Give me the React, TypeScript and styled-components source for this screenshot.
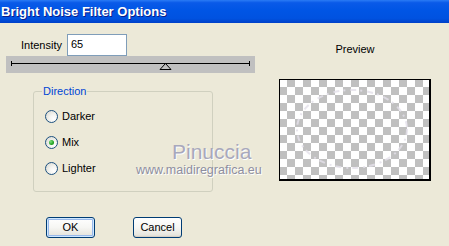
import React from 'react';
import styled, { createGlobalStyle } from 'styled-components';

const GlobalStyle = createGlobalStyle`
  html, body {
    margin: 0;
    padding: 0;
    background: #ece9d8;
  }
  body {
    font-family: "Liberation Sans", Arial, sans-serif;
    font-size: 11px;
    color: #000;
  }
`;

const Window = styled.div`
  position: relative;
  width: 449px;
  height: 246px;
  background: #ece9d8;
  display: flex;
  flex-direction: column;
  overflow: hidden;
`;

const TitleBar = styled.div`
  height: 23px;
  flex-shrink: 0;
  background: linear-gradient(
    180deg,
    #2a7bf5 0%,
    #0a5ae8 12%,
    #0055e5 45%,
    #0052e0 80%,
    #0040c8 100%
  );
  display: flex;
  align-items: center;
  padding-left: 1px;
`;

const TitleText = styled.span`
  font-family: "Liberation Sans", Arial, sans-serif;
  font-weight: bold;
  font-size: 13px;
  color: #fff;
  text-shadow: 1px 1px 0 #0a1e8a;
  line-height: 23px;
`;

const Body = styled.div`
  flex: 1;
  display: flex;
`;

const LeftColumn = styled.div`
  width: 279px;
  display: flex;
  flex-direction: column;
`;

const IntensityRow = styled.div`
  display: flex;
  align-items: center;
  gap: 5px;
  margin-top: 11px;
  padding-left: 21px;
`;

const Label = styled.span`
  font-size: 11px;
  line-height: 13px;
`;

const TextBox = styled.div`
  box-sizing: border-box;
  width: 60px;
  height: 22px;
  background: #fff;
  border: 1px solid #7f9db9;
  padding: 3px 0 0 3px;
  font-size: 11px;
  line-height: 13px;
`;

const SliderTrack = styled.div`
  position: relative;
  margin-left: 6px;
  width: 249px;
  height: 17px;
  background: #c0c0c0;
`;

const SliderLine = styled.div`
  position: absolute;
  left: 5px;
  right: 5px;
  top: 7px;
  height: 1px;
  background: #000;

  &::before,
  &::after {
    content: '';
    position: absolute;
    top: -2px;
    width: 1px;
    height: 5px;
    background: #000;
  }
  &::before { left: 0; }
  &::after { right: 0; }
`;

const Thumb = styled.svg`
  position: absolute;
  left: 153px;
  top: 7px;
`;

const GroupBox = styled.fieldset`
  box-sizing: border-box;
  margin: 12px 0 0 33px;
  width: 180px;
  height: 107px;
  padding: 0 0 0 11px;
  border: 1px solid #d0d0bf;
  border-radius: 3px;
  display: flex;
  flex-direction: column;
  gap: 13px;
`;

const Legend = styled.legend`
  padding: 0 1px;
  margin-left: -3px;
  color: #0046d5;
  font-size: 11px;
  line-height: 13px;
  margin-bottom: 12px;
`;

const RadioRow = styled.label`
  display: flex;
  align-items: center;
  gap: 4px;
  height: 13px;
  font-size: 11px;
  line-height: 13px;
`;

const RadioCircle = styled.span<{ $checked?: boolean }>`
  box-sizing: border-box;
  width: 13px;
  height: 13px;
  border-radius: 50%;
  border: 1px solid #1c5180;
  background: radial-gradient(circle at 70% 70%, #ffffff 0%, #f3f3ef 40%, #d6d5cc 100%);
  display: flex;
  align-items: center;
  justify-content: center;

  &::after {
    content: '';
    display: ${p => (p.$checked ? 'block' : 'none')};
    width: 5px;
    height: 5px;
    border-radius: 50%;
    background: radial-gradient(circle at 35% 35%, #7ee07e 0%, #21a121 60%, #1a8a1a 100%);
  }
`;

const ButtonRow = styled.div`
  display: flex;
  gap: 38px;
  margin: 25px 0 0 46px;
`;

const Button = styled.div<{ $default?: boolean }>`
  box-sizing: border-box;
  width: 49px;
  height: 21px;
  border: 1px solid #003c74;
  border-radius: 3px;
  background: linear-gradient(180deg, #ffffff 0%, #f6f6f3 50%, #e6e5de 90%, #d6d0c5 100%);
  box-shadow: ${p =>
    p.$default
      ? 'inset 0 0 0 1px #cee7ff, inset 0 0 0 2px #98b8ea'
      : 'inset 0 -1px 0 #d6d0c5'};
  display: flex;
  align-items: center;
  justify-content: center;
  font-size: 11px;
  line-height: 13px;
`;

const RightColumn = styled.div`
  width: 152px;
  display: flex;
  flex-direction: column;
  align-items: center;
`;

const PreviewLabel = styled.span`
  margin-top: 20px;
  font-size: 11px;
  line-height: 13px;
`;

const PreviewBox = styled.div`
  position: relative;
  box-sizing: border-box;
  margin-top: 23px;
  width: 152px;
  height: 102px;
  border: 1px solid #000;
  border-right-width: 2px;
  border-bottom-width: 2px;
  background: conic-gradient(#c0c0c0 25%, #fff 0 50%, #c0c0c0 0 75%, #fff 0) -1px -1px / 16px 16px;
`;

const NoiseRing = styled.svg`
  position: absolute;
  left: 14px;
  top: 7px;
`;

const Watermark = styled.div`
  position: absolute;
  left: 136px;
  top: 140px;
  display: flex;
  flex-direction: column;
  pointer-events: none;
`;

const WatermarkName = styled.span`
  margin-left: 36px;
  font-family: "Liberation Sans", Arial, sans-serif;
  font-size: 21px;
  line-height: 24px;
  color: #a8a8bc;
  text-shadow: 1px 1px 0 #ffffff;
`;

const WatermarkUrl = styled.span`
  font-family: "Liberation Sans", Arial, sans-serif;
  font-size: 12.5px;
  line-height: 12px;
  color: #8e8ea0;
  text-shadow: 1px 1px 0 #ffffff;
`;

const App: React.FC = () => {
  return (
    <>
      <GlobalStyle />
      <Window>
        <TitleBar>
          <TitleText>Bright Noise Filter Options</TitleText>
        </TitleBar>
        <Body>
          <LeftColumn>
            <IntensityRow>
              <Label>Intensity</Label>
              <TextBox>65</TextBox>
            </IntensityRow>
            <SliderTrack>
              <SliderLine />
              <Thumb width="13" height="7" viewBox="0 0 13 7">
                <path d="M6.5 0.5 L12 6.5 L1 6.5 Z" fill="none" stroke="#000" strokeWidth="1" />
              </Thumb>
            </SliderTrack>
            <GroupBox>
              <Legend>Direction</Legend>
              <RadioRow>
                <RadioCircle />
                Darker
              </RadioRow>
              <RadioRow>
                <RadioCircle $checked />
                Mix
              </RadioRow>
              <RadioRow>
                <RadioCircle />
                Lighter
              </RadioRow>
            </GroupBox>
            <ButtonRow>
              <Button $default>OK</Button>
              <Button>Cancel</Button>
            </ButtonRow>
          </LeftColumn>
          <RightColumn>
            <PreviewLabel>Preview</PreviewLabel>
            <PreviewBox>
              <NoiseRing width="116" height="84" viewBox="0 0 116 84">
                <ellipse
                  cx="58"
                  cy="42"
                  rx="55"
                  ry="39"
                  fill="none"
                  stroke="#e4e0ea"
                  strokeWidth="2"
                  strokeDasharray="6 4 2 5"
                  opacity="0.8"
                />
              </NoiseRing>
            </PreviewBox>
          </RightColumn>
        </Body>
        <Watermark>
          <WatermarkName>Pinuccia</WatermarkName>
          <WatermarkUrl>www.maidiregrafica.eu</WatermarkUrl>
        </Watermark>
      </Window>
    </>
  );
};

export default App;
